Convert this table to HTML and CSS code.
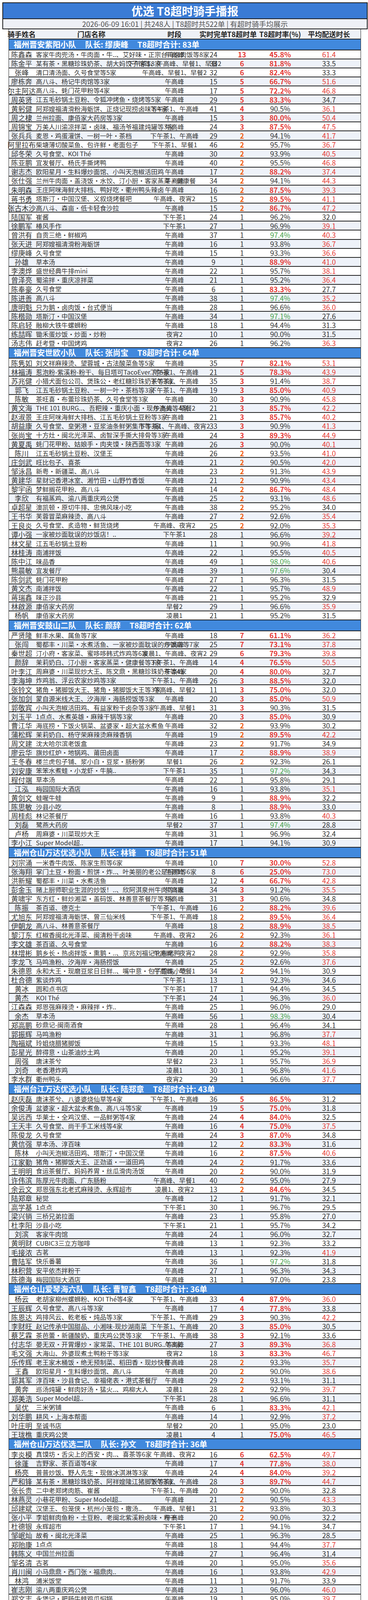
FILE: index.html
```html
<!DOCTYPE html>
<html lang="zh-CN">
<head>
<meta charset="utf-8">
<title>优选 T8超时骑手播报</title>
<link rel="stylesheet" href="styles.css">
</head>
<body>
<div class="page">
  <div class="banner">
    <div class="title">优选 T8超时骑手播报</div>
    <div class="sub">2026-06-09 16:01 | 共248人 | T8超时共522单 | 有超时骑手均展示</div>
  </div>
  <div class="table">
    <div class="row head">
      <span class="cell">骑手姓名</span>
      <span class="cell">门店名称</span>
      <span class="cell">时段</span>
      <span class="cell">实时完单</span>
      <span class="cell">T8超时单</span>
      <span class="cell">T8超时率(%)</span>
      <span class="cell">平均配送时长</span>
      <span class="cell"></span>
    </div>
    <div id="tbody"></div>
  </div>
</div>
<script src="app.js" charset="utf-8"></script>
</body>
</html>
```

FILE: styles.css
```css
* { box-sizing: border-box; }
body {
  margin: 0;
  background: #fff;
  font-family: "Noto Sans CJK SC", "Noto Sans", sans-serif;
  color: #333;
}
.page { width: 943px; padding: 6px 0 42px; }
.banner { margin-left: 6px; width: 936px; }
.title {
  height: 43px;
  background: #3a7bd5;
  border: 2px solid #1c1c1c;
  color: #fff;
  font-size: 29px;
  font-weight: 700;
  display: flex;
  align-items: center;
  justify-content: center;
  line-height: 1;
}
.sub {
  height: 26px;
  background: #eef0f6;
  border: 2px solid #1c1c1c;
  border-top: 0;
  color: #555;
  font-size: 18.5px;
  display: flex;
  align-items: center;
  justify-content: center;
  line-height: 1;
}
.table { margin-left: 22px; width: 903px; }
.row {
  display: grid;
  grid-template-columns: 65px 292px 134px 66px 80px 116px 134px 1fr;
  align-items: center;
  height: 23.1px;
  border: 1px solid #222;
  background: #fff;
  line-height: 1;
  white-space: nowrap;
}
.row.alt { background: #eef2f9; }
.row.head {
  height: 25px;
  border-top: 0;
  background: #eef1f7;
  font-weight: 700;
  font-size: 18px;
  color: #222;
}
.cell { display: flex; justify-content: center; white-space: nowrap; min-width: 0; }
.name { font-size: 18px; }
.store { justify-content: flex-start; padding-left: 4px; font-size: 16.4px; }
.per { font-size: 16.4px; }
.num { font-size: 18px; }
.to.hi { color: #e53935; font-weight: 700; }
.to.mid { color: #f05a0e; font-weight: 700; }
.rate.bad { color: #e53935; font-weight: 700; }
.rate.good { color: #43a047; }
.avg.slow { color: #e53935; }
.grp {
  display: flex;
  align-items: center;
  gap: 23px;
  height: 27.6px;
  padding-left: 12px;
  background: #4189dd;
  border: 1px solid #222;
  color: #fff;
  font-size: 20px;
  font-weight: 700;
  line-height: 1;
  white-space: nowrap;
}
```

FILE: app.js
```js
(function () {
  var groups = [
["福州晋安紫阳小队","缪庚峰",83,`
陈鑫森|客家牛肉兜汤·牛肉面·牛..、艾好味·正宗台湾卤肉饭等8家|午高峰|24|13|45.8|61.4
陈金平|某有茶·黑糖珍珠奶茶、胡大妈饺子馆等8家|下午茶1、午高峰、早餐1、早餐2|33|6|81.8|33.5
张峰|清口清汤面、久号食堂等5家|午高峰、早餐1、早餐2|32|6|82.4|33.3
廖栋奔|高八斗、杨记牛肉馆等3家|午高峰|15|5|66.7|51.6
尔主阿达|高八斗、蚝门花甲粉等4家|午高峰|17|5|72.2|46.8
周英贤|江五毛砂锅土豆粉、令狐冲烤鱼·烧烤等5家|午高峰|29|5|83.3|34.7
黄躬健|阿郑嫂福清滑粉海蛎饼、正烧记现捞卤味等4家|下午茶1、午高峰|41|4|90.5|36.1
周之棣|兰州拉面、康佰家大药房等3家|午高峰|15|3|80.0|50.4
周锦宝|万美人川渝凉拌菜·卤味、福汤爷福建炖罐等3家|午高峰|24|3|87.5|47.5
张兵兵|麦恩·鸡蛋灌饼、一树一叶·茶档|下午茶1、午高峰|29|2|94.1|41.7
阿里拉布|柴塘薄切酸菜鱼、包许鲜·老面包子|下午茶1、早餐1|46|2|95.7|36.7
邱冬荣|久号食堂、KOI Thé|午高峰|30|2|93.9|40.5
陈亚鹏|宜发餐厅、杨氏手撕烤鸭|午高峰|40|2|95.5|46.8
谢志杰|欧阳星月·生料爆炒面馆、小叫天泡椒活田鸡|午高峰|17|2|88.2|37.4
张仕强|兰州牛肉面·盖浇饭·水饺、汀小厨·客家蒸菜·健康餐|午高峰|34|2|94.1|44.3
朱明森|王庄阿咪海鲜大排档、鸭好吃·衢州鸭头辣卤|午高峰|16|2|87.5|39.3
蒋书勇|塔斯汀·中国汉堡、义叙烧烤餐吧|午高峰、夜宵2|15|2|89.5|41.1
张古木沙|高八斗、森亩·低卡轻食沙拉|午高峰|15|2|86.7|47.2
陆国军|崔酱|下午茶1|24|1|96.2|32.0
徐鹏军|椿风手作|下午茶1|27|1|96.9|39.1
曾洪有|自贡三绝·鲜椒鸡|午高峰|37|1|97.4|40.3
张天进|阿郑嫂福清滑粉海蛎饼|午高峰|16|1|93.8|36.7
缪庚峰|久号食堂|午高峰|15|1|93.3|36.6
孙雄|草本汤|午高峰|9|1|88.9|41.0
李澳烨|盛世经典牛排mini|午高峰|22|1|95.7|38.1
曾泽亮|蜀渝拌·重庆凉拌菜|午高峰|21|1|95.2|36.4
陈奉豪|久号食堂|午高峰|6|1|83.3|27.7
陈进善|高八斗|午高峰|38|1|97.4|35.2
唐明魁|只为鹅·卤肉饭·台式便当|午高峰|28|1|96.6|36.0
陈楷勋|塔斯汀·中国汉堡|午高峰|34|1|97.1|27.6
陈启轻|融柳大铁牛螺蛳粉|午高峰|18|1|94.4|31.3
练喆晖|锄禾蛋炒饭·炒面·炒粉|夜宵2|10|1|90.0|31.5
汤志伟|赶考暨·中国烤鸡|夜宵2|26|1|96.2|36.3
`],
["福州晋安世欧小队","张尚宝",64,`
陈隽如|刘文祥麻辣烫、望蓉城·古法酸菜鱼等5家|午高峰|35|7|82.1|53.1
林福涛|惹泡粉-紫溪粉-粉干、每日塔可TacoEver..等5家|下午茶1、午高峰|21|5|78.3|43.9
苏兆健|小猎犬面包公司、煲珠公·老红糖珍珠奶茶等3家|下午茶1、午高峰|35|3|91.4|38.7
郭飞|江五毛砂锅土豆粉、一树一叶·茶档等3家|下午茶1、午高峰|19|3|85.0|40.9
陈敏|茶旺喜·布蕾珍珠奶茶、久号食堂等3家|午高峰|30|3|90.9|45.8
黄文海|THE 101 BURG..、吾粑辣·重庆小面·现炒浇头等4家|午高峰、早餐2|21|3|85.7|42.2
赵淑景|王庄阿咪海鲜大排档、江五毛砂锅土豆粉等3家|午高峰|21|3|85.7|40.2
胡益康|久号食堂、皇粥港·豆浆油条鲜粥集市等3家|下午茶1、午高峰、夜宵2|33|3|90.9|41.3
张尚宝|十方灶·闽北光泽菜、卤智深手撕大排骨等3家|午高峰|24|3|89.3|44.9
黄夏禹|蚝门花甲粉、姑娘手·肉夹馍·陕西面等3家|午高峰|26|3|90.0|40.1
陈川|江五毛砂锅土豆粉、汉堡王|午高峰|26|2|93.5|41.0
庄剑武|旺比包子、喜茶|午高峰|21|2|90.5|42.0
邹泳昌|新粤·新疆菜、高八斗|午高峰|23|2|91.3|43.9
黄建华|星财记香港冰室、湘竹田·山野竹香饭|午高峰|21|2|90.9|43.4
黎宇函|梦鲜搁花甲粉、高八斗|午高峰|14|2|86.7|48.4
李欣|有福蒸鸡、渝八两重庆鸡公煲|午高峰|25|2|93.1|48.6
卓超星|澳凯顿·原切牛排、忠佛风味小吃|午高峰|38|2|95.2|34.0
王书华|芙蓉冒菜麻辣烫、高八斗|午高峰|27|2|92.6|35.4
王良炎|久号食堂、炙造物·鲜货烧烤|午高峰、夜宵2|25|2|92.0|35.3
谭小强|一家被炒面耽误的炒饭店！..|下午茶1|28|1|96.6|39.2
林文星|江五毛砂锅土豆粉|午高峰|11|1|90.9|41.8
林桂涛|南浦拌饭|午高峰|22|1|95.5|40.5
陈中江|味品香|午高峰|49|1|98.0|40.6
熊晨敏|宜发餐厅|午高峰|39|1|97.6|30.4
陈剑武|蚝门花甲粉|午高峰|27|1|96.3|31.5
黄文杰|南浦拌饭|午高峰|22|1|95.7|48.9
蒋瑞鑫|味正沙县|午高峰|21|1|95.2|32.9
林啟源|康佰家大药房|早餐2|29|1|96.6|35.9
杨帆|康佰家大药房|凌晨1|21|1|95.2|31.5
`],
["福州晋安鼓山二队","颜辞",62,`
严贤隆|鲜丰水果、属鱼等7家|午高峰|18|7|61.1|36.2
张闯|蜀都丰·川菜·水煮活鱼、一家被炒面耽误的炒饭店等7家|午高峰|25|7|73.1|37.8
秦世超|汀小府·客家菜、蜜哆哆韩式炸鸡等6家|凌晨1、午高峰、夜宵2|29|6|79.3|39.8
颜辞|茉莉奶白、汀小厨·客家蒸菜·健康餐等3家|下午茶1、午高峰|14|4|76.5|50.5
叶李江|周麻婆·川菜现炒大王、陈文鼎·黑糖珍珠奶茶等4家|午高峰|20|4|80.0|32.7
李海坤|炸鸡翁、浮云农家炒鸡等3家|下午茶1、午高峰|26|3|88.5|32.0
张铃文|猪角·猪脚饭大王、猪角·猪脚饭大王等3家|午高峰、早餐2|11|3|75.0|32.0
张加剑|蒙自源米线大王、汐海岸·海肠捞饭等3家|午高峰|20|3|85.0|50.9
郭敬宾|小叫天泡椒活田鸡、有益家粉干卤杂等3家|午高峰、早餐1|31|3|90.3|31.5
刘玉平|1点点、水煮英雄·麻辣干锅等3家|午高峰|20|3|85.0|30.9
曹江华|海底捞·下饭火锅菜、盆婆家·超大盆水煮鱼|午高峰|32|2|93.9|30.2
蒲松辉|茉莉奶白、杨守荣麻辣烫麻辣香锅|午高峰|19|2|89.5|42.2
周文建|沈大哈尔滨老饭盒|午高峰|23|2|91.7|34.9
廖云华|旗炒红炉·地锅鸡、莆田卤面|午高峰|17|2|88.9|38.9
王冬春|楼兰虎包子铺、浆小白·豆浆·肠粉粥|早餐1|26|2|92.3|26.1
刘安康|笨笨水煮蛙·小龙虾·牛腩..|下午茶1|35|1|97.2|34.3
程付端|草本汤|午高峰|22|1|95.8|29.1
江泓|梅园国际大酒店|午高峰|16|1|93.8|35.1
黄剑文|蛙喔牛蛙|午高峰|9|1|88.9|32.2
陈思敏|沙县小吃|午高峰|8|1|88.9|33.0
周桂彪|林记茶餐厅|午高峰|16|1|93.8|40.3
刘磊|鹭燕大药房|早餐2|37|1|97.4|28.8
卢杨|周麻婆·川菜现炒大王|午高峰|31|1|96.9|32.4
李小江|Super Model超..|午高峰|17|1|94.1|30.9
`],
["福州仓山万达优选小队","林锋",51,`
刘宗涌|一米香牛肉饭、陈家生煎等6家|午高峰|10|7|30.0|52.8
张海翔|掌门土豆·粉面·煎饼·炸..、叶美丽的老公是厨师等6家|午高峰|8|6|25.0|73.0
洪新耀|蜀都丰·川菜·水煮活鱼|午高峰|12|4|66.7|42.8
彭金玉|赌上厨师职业生涯的炒饭！..、欣阿淇泉州牛肉等3家|午高峰|34|3|91.2|35.5
黄啸宇|东方红·鲜炒湘菜·盖码饭、林善意茶餐厅等3家|午高峰|31|3|90.6|34.8
陈振|茶百道、德克士|下午茶1、午高峰|16|2|88.2|39.6
尤旭东|阿郑嫂福清海蛎饼、曾三仙米线|下午茶1、午高峰|18|2|89.5|36.4
伊朝龙|高八斗、林善意茶餐厅|午高峰|18|2|88.9|38.5
黎汀东|红椒香闽北光泽菜、闽清粉干卤味|午高峰、夜宵2|26|2|92.3|36.1
李文雄|茶百道、久号食堂|午高峰|16|2|88.2|38.3
林增彬|鹅乡长·热卤拌饭·熏鹅·..、京兆刘福记北京烤鸭|午高峰、夜宵2|28|2|92.9|35.8
李龙飞|马鸣渔粉、汐海岸·海肠捞饭|午高峰|25|2|92.6|37.6
朱德恩|永和大王·现磨豆浆日日鲜..、嘴中意·包子馄饨小吃|午高峰、早餐1|34|2|94.1|30.9
杜合德|紫谈炸鸡|下午茶1|13|1|92.3|34.6
黄冰|圆和点书店|下午茶1|17|1|94.4|34.5
黄杰|KOI Thé|下午茶1|24|1|96.3|36.0
江森森|郑恩强麻辣烫·麻辣拌·炸..|午高峰|25|1|96.0|29.0
余杰|草本汤|午高峰|56|1|98.3|30.4
郑高鹏|砂鼎记-闽南酒食|午高峰|28|1|96.4|34.1
郭振辉|马鸣渔粉|午高峰|31|1|96.8|37.7
陶福斌|玲姐烧腊猪脚饭|午高峰|15|1|93.3|48.1
彭星光|醉得意·山茶油炒土鸡|午高峰|20|1|95.2|39.1
周强|唐沫茶兮|早餐2|23|1|95.7|36.9
刘奇|老香港炸鸡|凌晨1|30|1|96.8|41.6
李水群|衢州鸭头|夜宵2|29|1|96.6|37.7
`],
["福州台江万达优选小队","陆郑章",43,`
赵庆磊|唐沫茶兮、八婆婆烧仙草等4家|下午茶1、午高峰|36|5|86.5|31.2
余俊涛|盆婆家·超大盆水煮鱼、高八斗等5家|午高峰|19|5|75.0|31.8
吴远西|华莱士·全鸡汉堡、一品鲜粥等4家|午高峰|24|4|84.0|32.5
王天丰|久号食堂、尚干手工米线等4家|午高峰|16|4|75.0|37.5
陈俊龙|久号食堂|午高峰|24|3|87.0|34.8
黄信强|草本汤、淳百味|午高峰|12|2|83.3|31.6
陈林|小叫天泡椒活田鸡、塔斯汀·中国汉堡|午高峰|16|2|87.5|40.6
江家勤|猪角·猪脚饭大王、正劲道·一道田鸡|午高峰|24|2|91.7|33.6
王明明|食运茶餐厅、妈妈养胃·丝瓜滑肉汤饭|午高峰|20|2|90.0|31.9
许伟滨|陈厚元牛肉面、广东肠粉|午高峰、早餐1|40|2|95.0|27.9
余云文|郑恩强东北老式麻辣烫、永辉超市|凌晨1、夜宵2|13|2|84.6|34.5
陆郑章|秘觉|午高峰|12|1|91.7|32.1
高学基|1点点|下午茶1|30|1|96.7|29.5
梁兴销|三桥兄弟拉面|午高峰|23|1|95.8|27.0
杜李阳|沙县小吃|下午茶1|21|1|95.7|34.2
刘滨|客家牛肉馆|午高峰|24|1|96.0|32.7
黄明财|CUBIC3三立方咖啡|午高峰|13|1|92.3|33.2
毛接浓|古茗|午高峰|13|1|92.3|41.9
曹陆军|快乐番薯|午高峰|36|1|97.2|31.8
林积营|安平依杰拌粉干|午高峰|27|1|96.3|34.3
陈德海|梅园国际大酒店|午高峰|31|1|97.0|23.8
`],
["福州仓山爱琴海六队","曹智鑫",36,`
杨云|老胡家柳州螺蛳粉、KOI Thé等4家|下午茶1、午高峰|33|4|87.9|36.0
王辰辉|久号食堂、高八斗等3家|午高峰|17|4|77.8|33.8
陈恩达|鸡排风云、乾老板·炖品等3家|下午茶1、午高峰|29|3|90.3|42.2
李财旺|赵记传承中国甜品、小湘味-现炒湖南菜|下午茶1、午高峰|20|3|85.0|30.5
蔡艺霖|茶芭蕾·新疆酸奶、重庆鸡公煲等3家|下午茶1、午高峰|38|3|92.1|33.6
付志华|晏无双·开胃爆炒·家常菜、THE 101 BURG..等3家|午高峰|27|3|89.3|36.8
毛文强|大海山、外婆现煮土鸭粉干等3家|夜宵2|18|3|83.3|46.7
乐传辉|老王家木桶饭·绝无预制菜、稻田香·现炒快餐|午高峰|28|2|93.3|35.7
王鑫|欧阳星月·生料爆炒面馆、高八斗|午高峰|20|2|90.0|38.6
郭其军|淳百味·沙县食记、幸福佬表·港式茶餐厅|午高峰|29|2|93.1|31.1
黄奔|巡汤炖罐·鲜肉好汤·猛火..、鸡柳大人|凌晨1|28|2|92.9|39.7
郑美浩|Super Model超..|下午茶1|28|1|96.6|31.1
吴优|三米粥铺|午高峰|6|1|83.3|42.1
刘华鹏|耕风·上海本帮面|午高峰|14|1|92.9|37.2
叶庄明|至诚书店|早餐2|20|1|95.0|23.0
王珑樵|重庆鸡公煲|凌晨1|4|1|75.0|46.5
`],
["福州仓山万达优选二队","孙文",36,`
李炎模|真馍坊·舌尖上的西安·肉..、喜茶等6家|午高峰、夜宵2|16|6|62.5|49.7
徐蓬|吉野家、茶百道等4家|午高峰|17|4|77.8|38.0
杨亮|普普炒饭、野人先生·现做冰淇淋等3家|午高峰|24|4|84.0|39.2
严和锋|某有茶·黑糖珍珠奶茶、阿祥嫂隆江猪脚饭等3家|下午茶1、午高峰|28|3|89.7|44.7
张长贵|二中老郑烤肉筋、崔酱|下午茶1、午高峰|20|2|90.0|32.8
林燕灵|小巷花甲粉、Super Model超..|午高峰|21|2|90.5|43.3
邱建斌|汉堡王、包笼侠·杭州小笼包·撒汤..|午高峰、早餐1|31|2|93.8|30.3
张小平|李姐鲜肉鱼粉·土豆粉、老闽北紫溪粉卤味·粉干|午高峰|20|2|90.0|32.2
杜德银|永辉超市|下午茶1|17|1|94.1|34.7
邹岷灿|故肴·闽北光泽菜|午高峰|25|1|96.3|28.5
郑贻康|1点点|午高峰|18|1|94.4|37.7
韩陈义|中国兰州拉面|午高峰|27|1|96.4|31.4
邹名清|古茗|午高峰|20|1|95.0|35.6
肖川闽|小马鼎鼎·西门张·福鼎肉..|午高峰|16|1|93.8|42.9
林鸿|浦米饭堂|午高峰|11|1|91.7|33.9
崔志刚|渝八两重庆鸡公煲|午高峰|23|1|96.0|46.0
郑文志|永煲记·肥肠牛蛙鸡爪焖锅..|午高峰|19|1|95.0|39.7
刘秀凡|三米粥铺|早餐1|22|1|95.7|34.6
宋应富|三米粥铺|早餐1|20|1|95.2|33.4
`],
["福州仓山爱琴海八队","严彬彬",29,`
方治团|觉世双椒麻辣香锅麻辣烫、巷口捞化等5家|午高峰、夜宵2|14|6|57.1|54.7
余银州|德克士·汉堡炸鸡、巷口捞化等3家|下午茶1、午高峰|21|3|86.4|34.9
林小煌|崔酱、柳州富上煌·大骨螺蛳粉等3家|午高峰|27|3|88.9|39.2
胡志远|普普炒饭、达道牛肉|午高峰|34|2|94.1|38.3
陈孝沪|烤肉拌饭脆皮鸡饭、东北佬菜馆|午高峰|18|2|88.9|34.5
严彬彬|云南小锅米线、暖燕·姨妈热饮·现炖燕窝|午高峰、早餐2|17|2|88.2|36.6
黄莉燕|吉发瓦香鸡·单锅现炒|下午茶1|43|1|97.7|34.6
郑剑标|汀小府·福建客家菜|午高峰|18|1|94.4|41.5
余翀|阿郑嫂福清海蛎饼|午高峰|23|1|95.7|41.1
江少洋|塔斯汀·中国汉堡|午高峰|18|1|94.7|38.1
唐龙金|汀小厨·客家蒸菜·健康餐|午高峰|14|1|92.9|38.8
陈贵评|渝八两重庆鸡公煲|午高峰|33|1|97.0|33.0
伏洪江|高八斗|午高峰|12|1|91.7|51.6
施乐章|立品食堂|午高峰|11|1|90.9|37.1
范智强|嘴中意·包子炖罐·小吃|午高峰|14|1|93.3|32.7
郑建丰|树夏|早餐2|31|1|96.8|32.5
兰彬|菌菇鸡汤米线|夜宵2|32|1|96.9|35.8
`],
["福州仓山爱琴海七队","叶世华",29,`
唐世明|赛百味·三明治、串意十足烧烤·招牌鸡边等6家|下午茶1、午高峰、夜宵2|36|8|77.8|40.1
赵彦星|私町寿司、天玖王炝肉·卤面等3家|午高峰|29|3|90.6|34.3
宋志林|树夏、肥姨妈·大骨螺蛳粉|下午茶1、午高峰|28|2|93.3|41.4
纪联昭|东北佬菜馆、周麻婆·阿婆下饭菜|午高峰|26|2|92.6|37.1
俞恩惠|三米粥铺、沈大哈尔滨老饭盒|午高峰|13|2|85.7|41.7
宋杰|山河屯铁锅炖·东北菜|下午茶1|36|1|97.3|31.2
林正熹|古茗|下午茶1|23|1|95.8|28.0
张世松|晏无双·开胃爆炒·家常菜|午高峰|20|1|95.5|39.5
林心武|嘴中意·炖罐·包点小吃|午高峰|22|1|95.5|37.3
吴浩楠|周麻婆·阿婆下饭菜|午高峰|20|1|95.0|39.4
张良杰|鲜嫩水煮·水煮肉片·田鸡|午高峰|28|1|96.4|36.3
林先惠|高八斗|午高峰|22|1|95.8|31.0
陈浩然|高八斗|午高峰|14|1|92.9|39.6
林宗虎|食野·SAYYEAH·创..|午高峰|25|1|96.0|45.3
陈开荣|蜀都丰·川菜·水煮活鱼|早餐2|56|1|98.3|28.4
冯双|三米粥铺|早餐2|28|1|96.6|30.9
黄盛|鸡柳大人|夜宵2|23|1|95.7|40.9
`],
["福州仓山爱琴海五队","赖剑锋",26,`
梁志强|可恋·沙茶面、猪仔强把子肉肉酱米线等5家|午高峰|9|5|44.4|58.1
王江|久号食堂、茶芭蕾·新疆酸奶等3家|午高峰|33|3|90.9|35.6
刘新宇|七恭冒菜、惹泡粉·紫溪粉·粉干等3家|午高峰|9|3|66.7|61.3
陈灿辉|食运茶餐厅、真馍坊·舌尖上的西安·肉..等3家|午高峰|22|3|87.5|43.7
余贤惠|云梢雀·云南小锅米线、探鱼烤鱼等3家|午高峰|26|3|88.5|30.6
叶智梁|福屿捞化、德克士·汉堡炸鸡|午高峰|16|2|88.2|37.9
吴明宏|喜茶、茶百道|午高峰、早餐1|10|2|80.0|29.0
李嘉豪|Manner Coffe..|下午茶1|32|1|97.1|32.6
刘彪|乾老板·炖品|午高峰|22|1|95.5|31.3
林鑫|王小味·大厨小炒|午高峰|39|1|97.6|30.3
陈佳荣|108灶·地道川菜|午高峰|28|1|96.4|36.0
玉世荣|杭景元·东北老式麻辣烫|凌晨1|19|1|94.7|35.2
`],
["福州仓山爱琴海三队","陈绪彬",18,`
胡宇晖|乾老板·炖品、吾大发·南洋海鲜捞面·新..等5家|午高峰、夜宵2|21|5|76.2|42.7
江佳文|久号食堂、欣阿淇泉州牛肉|午高峰|27|3|89.3|37.3
林振宇|711便利店、蜀都丰·川菜·水煮活鱼|下午茶1、午高峰|23|2|91.3|32.1
唐云飞|喜茶、国惠大酒楼|下午茶1、午高峰|30|2|94.1|31.0
陈绪彬|煲珠公·老红糖珍珠奶茶、马鸣渔粉|午高峰|17|2|88.2|37.4
王官印|老长沙茶油铁板烤鸭饭、客源丰·牛肉拌饭·兜汤|午高峰|23|2|91.7|34.2
黄亦波|高八斗|午高峰|19|1|95.2|40.5
叶金辉|1点点|午高峰|18|1|94.4|37.9
`],
["台江万达优选三队","危敏驰",17,`
陆荣通|谷之尚·农物餐厅、食野SAYYEAH创意轻..等5家|午高峰|10|5|54.5|55.6
李少飞|味品香、茉莉奶白|下午茶1|25|2|93.3|27.7
丁盛|茶百道、久号食堂|下午茶1、午高峰|22|2|90.9|27.5
张勇|包许鲜·许鲜包子、康佰家大药房|午高峰、早餐2|24|2|91.7|30.7
张旺|壹合先生的食堂日式简餐·..、妈妈养胃·丝瓜滑肉汤饭|午高峰|28|2|93.1|28.3
黄旗|匠一锅·牛骨锅|午高峰|17|1|94.1|36.7
瞿锦松|久号食堂|午高峰|18|1|94.4|29.6
梁科|兰州牛肉面|午高峰|33|1|97.0|34.2
陈文斌|康佰家大药房|午高峰|19|1|95.2|31.2
`],
["福州城门优选二队","欧树峰",15,`
陈翔希|711便利店、李山山茶事等3家|午高峰|32|3|90.6|29.2
许文涛|福龙腾食堂·新鲜现炒、沪上阿姨·精选茶饮等3家|午高峰、夜宵2|15|3|82.4|37.1
严锦新|猪仔强把子肉肉酱米线、沙县小吃|午高峰、早餐2|15|2|86.7|29.6
张银军|永辉超市、蜀渝拌·重庆凉拌菜|早餐1、早餐2|22|2|90.9|25.7
季立龙|六意便利店|午高峰|10|1|90.0|29.0
孙建林|草本汤|午高峰|24|1|96.3|26.1
高建颜|豆花牛肉是招牌|午高峰|12|1|91.7|29.4
张国兵|塔斯汀·中国汉堡|午高峰|21|1|95.2|26.4
雍浩|清口清汤面|早餐1|35|1|97.2|26.9
`],
["福州城门优选小队","王军",13,`
李仁权|蜜雪冰城|午高峰|16|4|76.5|34.1
林勇|德克士、永辉线上超市|午高峰、早餐2|19|2|90.0|28.4
刘延佳|喜茶|下午茶1|21|1|95.2|18.7
黄李建|茉凝香|下午茶1|28|1|96.4|25.4
林旺|牛约堡-手作牛肉汉堡|午高峰|17|1|94.1|24.8
杨帅|小叫天泡椒活田鸡|午高峰|15|1|93.3|34.5
连福晖|草本汤|午高峰|25|1|96.0|30.4
陈兴国|海王星辰·隐形眼镜|早餐2|19|1|94.7|27.0
严凯建|杭景元·东北老式麻辣烫·..|午高峰|12|1|92.3|23.0
`]
  ];

  var out = [];
  groups.forEach(function (g) {
    out.push('<div class="grp"><span>' + g[0] + '</span><span>队长: ' + g[1] +
      '</span><span>T8超时合计: ' + g[2] + '单</span></div>');
    var lines = g[3].split('\n').filter(function (l) { return l.trim().length; });
    lines.forEach(function (line, i) {
      var f = line.trim().split('|');
      var to = parseInt(f[4], 10);
      var rate = parseFloat(f[5]);
      var avg = parseFloat(f[6]);
      var toC = to >= 3 ? ' hi' : (to === 2 ? ' mid' : '');
      var rC = rate < 90 ? ' bad' : (rate > 97 ? ' good' : '');
      var aC = avg > 35 ? ' slow' : '';
      out.push(
        '<div class="row' + (i % 2 ? ' alt' : '') + '">' +
        '<span class="cell name">' + f[0] + '</span>' +
        '<span class="cell store">' + f[1] + '</span>' +
        '<span class="cell per">' + f[2] + '</span>' +
        '<span class="cell num">' + f[3] + '</span>' +
        '<span class="cell num to' + toC + '">' + f[4] + '</span>' +
        '<span class="cell num rate' + rC + '">' + f[5] + '%</span>' +
        '<span class="cell num avg' + aC + '">' + f[6] + '</span>' +
        '<span class="cell"></span>' +
        '</div>'
      );
    });
  });
  document.getElementById('tbody').innerHTML = out.join('');
})();
```
